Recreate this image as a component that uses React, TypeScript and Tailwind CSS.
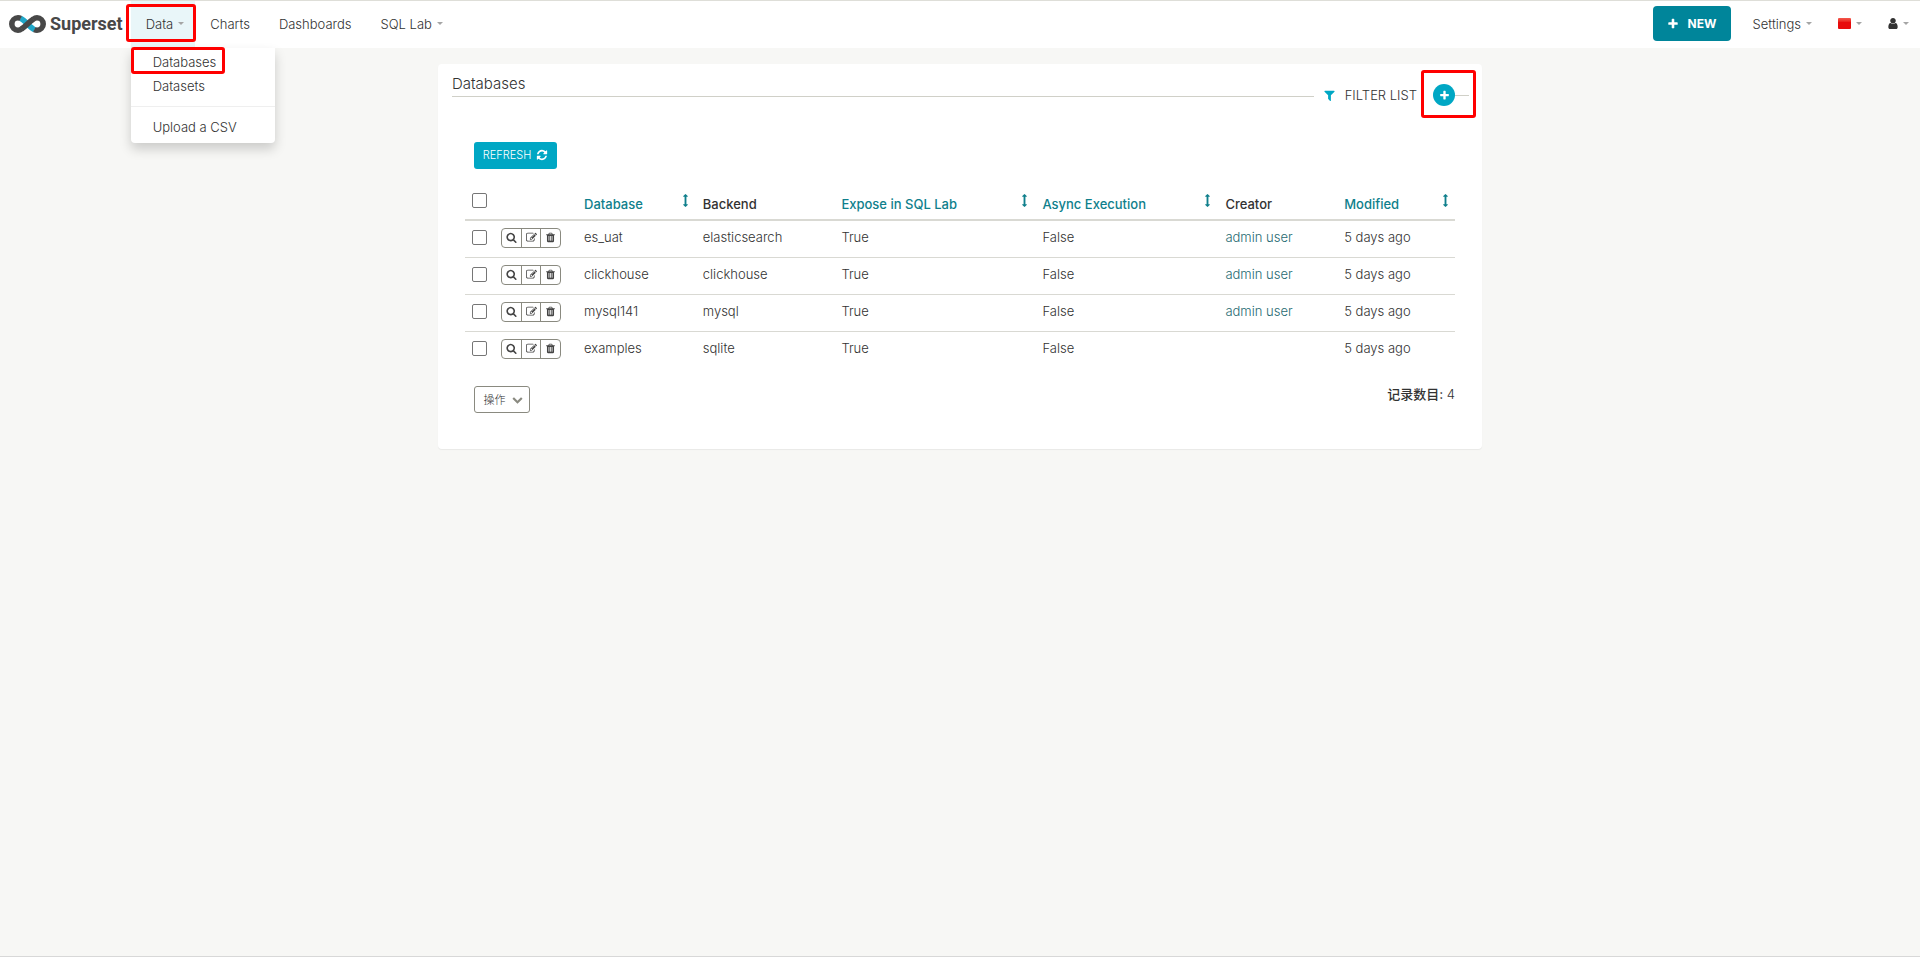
import type { ReactNode } from 'react';

const ICONS = {
  plus: 'M1600 736v192q0 40-28 68t-68 28h-416v416q0 40-28 68t-68 28h-192q-40 0-68-28t-28-68v-416h-416q-40 0-68-28t-28-68v-192q0-40 28-68t68-28h416v-416q0-40 28-68t68-28h192q40 0 68 28t28 68v416h416q40 0 68 28t28 68z',
  search:
    'M1216 832q0-185-131.5-316.5t-316.5-131.5-316.5 131.5-131.5 316.5 131.5 316.5 316.5 131.5 316.5-131.5 131.5-316.5zm512 832q0 52-38 90t-90 38q-54 0-90-38l-343-342q-179 124-399 124-143 0-273.5-55.5t-225-150-150-225-55.5-273.5 55.5-273.5 150-225 225-150 273.5-55.5 273.5 55.5 225 150 150 225 55.5 273.5q0 220-124 399l343 343q37 37 37 90z',
  edit: 'M888 1184l116-116-152-152-116 116v56h96v96h56zm440-720q-16-16-33 1l-350 350q-17 17-1 33t33-1l350-350q17-17 1-33zm80 594v190q0 119-84.5 203.5t-203.5 84.5h-832q-119 0-203.5-84.5t-84.5-203.5v-832q0-119 84.5-203.5t203.5-84.5h832q63 0 117 25 15 7 18 23 3 17-9 29l-49 49q-14 14-32 8-23-6-45-6h-832q-66 0-113 47t-47 113v832q0 66 47 113t113 47h832q66 0 113-47t47-113v-126q0-13 9-22l64-64q15-15 35-7t20 29zm-96-738l288 288-672 672h-288v-288zm444 132l-92 92-288-288 92-92q28-28 68-28t68 28l152 152q28 28 28 68t-28 68z',
  trash:
    'M704 1376v-704q0-14-9-23t-23-9h-64q-14 0-23 9t-9 23v704q0 14 9 23t23 9h64q14 0 23-9t9-23zm256 0v-704q0-14-9-23t-23-9h-64q-14 0-23 9t-9 23v704q0 14 9 23t23 9h64q14 0 23-9t9-23zm256 0v-704q0-14-9-23t-23-9h-64q-14 0-23 9t-9 23v704q0 14 9 23t23 9h64q14 0 23-9t9-23zm-544-992h448l-48-117q-7-9-17-11h-317q-10 2-17 11zm928 32v64q0 14-9 23t-23 9h-96v948q0 83-47 143.5t-113 60.5h-832q-66 0-113-58.5t-47-141.5v-952h-96q-14 0-23-9t-9-23v-64q0-14 9-23t23-9h309l70-167q15-37 54-63t79-26h320q40 0 79 26t54 63l70 167h309q14 0 23 9t9 23z',
  refresh:
    'M1639 1056q0 5-1 7-64 268-268 434.5t-478 166.5q-146 0-282.5-55t-243.5-157l-129 129q-19 19-45 19t-45-19-19-45v-448q0-26 19-45t45-19h448q26 0 45 19t19 45-19 45l-137 137q71 66 161 102t187 36q134 0 250-65t186-179q11-17 53-117 8-23 30-23h192q13 0 22.5 9.5t9.5 22.5zm25-800v448q0 26-19 45t-45 19h-448q-26 0-45-19t-19-45 19-45l138-138q-148-137-349-137-134 0-250 65t-186 179q-11 17-53 117-8 23-30 23h-199q-13 0-22.5-9.5t-9.5-22.5v-7q65-268 270-434.5t480-166.5q146 0 284 55.5t245 156.5l130-129q19-19 45-19t45 19 19 45z',
  filter:
    'M1595 295q17 41-14 70l-493 493v742q0 42-39 59-13 5-25 5-27 0-45-19l-256-256q-19-19-19-45v-486l-493-493q-31-29-14-70 17-39 59-39h1280q42 0 59 39z',
  user: 'M1536 1399q0 109-62.5 187t-150.5 78h-854q-88 0-150.5-78t-62.5-187q0-85 8.5-160.5t31.5-152 58.5-131 94-89 134.5-34.5q131 128 313 128t313-128q76 0 134.5 34.5t94 89 58.5 131 31.5 152 8.5 160.5zm-256-887q0 159-112.5 271.5t-271.5 112.5-271.5-112.5-112.5-271.5 112.5-271.5 271.5-112.5 271.5 112.5 112.5 271.5z',
  chevronDown:
    'M1683 808l-742 741q-19 19-45 19t-45-19l-742-741q-19-19-19-45.5t19-45.5l166-165q19-19 45-19t45 19l531 531 531-531q19-19 45-19t45 19l166 165q19 19 19 45.5t-19 45.5z',
  sort: 'M1216 320q0 26-19 45t-45 19h-128v1024h128q26 0 45 19t19 45-19 45l-256 256q-19 19-45 19t-45-19l-256-256q-19-19-19-45t19-45 45-19h128v-1024h-128q-26 0-45-19t-19-45 19-45l256-256q19-19 45-19t45 19l256 256q19 19 19 45z',
};

const Icon = ({
  name,
  className,
  viewBox = '0 0 1792 1792',
}: {
  name: keyof typeof ICONS;
  className: string;
  viewBox?: string;
}) => (
  <svg viewBox={viewBox} fill="currentColor" aria-hidden="true" className={`shrink-0 ${className}`}>
    <path d={ICONS[name]} />
  </svg>
);

const Caret = () => (
  <span className="border-x-[3px] border-t-[3px] border-x-transparent border-t-[#a5a5a5]" />
);

const Logo = () => (
  <a href="#" className="flex items-center gap-1 pb-[2px] pl-[9px]" aria-label="Superset">
    <svg viewBox="0 0 37 18" className="h-[18px] w-[37px]" fill="none" strokeWidth="5.6">
      <path d="M11.500 3.300c2.300 1.100 4.700 3.400 7 5.700s4.700 4.600 7 5.700" stroke="#20a7c9" />
      <path d="M13 13.600C11.700 14.600 10.500 15.200 9 15.200a6.200 6.200 0 0 1 0-12.400c1 0 1.900.2 2.700.6" stroke="#484848" />
      <path d="M24 4.400c1.300-1 2.500-1.600 4-1.600a6.200 6.200 0 0 1 0 12.400c-1 0-1.900-.2-2.700-.6" stroke="#484848" />
      <path d="M12.600 13.900c2-1.400 3.900-3 5.900-4.900s3.900-3.600 5.900-4.900" stroke="#484848" />
    </svg>
    <span className="font-[Roboto] text-[18px] leading-6 font-bold text-[#484848]">Superset</span>
  </a>
);

const NavItem = ({ children, caret, active }: { children: ReactNode; caret?: boolean; active?: boolean }) => (
  <button
    type="button"
    className={`flex h-full items-center gap-[5px] ${caret ? 'pr-[11px]' : 'pr-[14px]'} pb-[2px] pl-[15px] ${active ? 'bg-[#e9f6f9]' : ''}`}
  >
    {children}
    {caret && <Caret />}
  </button>
);

const Checkbox = ({ label }: { label: string }) => (
  <input
    type="checkbox"
    aria-label={label}
    className="block size-[15px] appearance-none rounded-[2px] border border-[#767676] bg-white"
  />
);

const COLUMNS = [
  { title: 'Database', sortable: true },
  { title: 'Backend', sortable: false },
  { title: 'Expose in SQL Lab', sortable: true },
  { title: 'Async Execution', sortable: true },
  { title: 'Creator', sortable: false },
  { title: 'Modified', sortable: true },
];

const ROWS = [
  { name: 'es_uat', backend: 'elasticsearch', creator: 'admin user' },
  { name: 'clickhouse', backend: 'clickhouse', creator: 'admin user' },
  { name: 'mysql141', backend: 'mysql', creator: 'admin user' },
  { name: 'examples', backend: 'sqlite', creator: '' },
];

const Navbar = () => (
  <header className="flex h-12 justify-between border-t border-[#deded8] bg-white">
    <div className="flex">
      <Logo />
      <nav className="ml-2 flex">
        <div className="relative">
          <NavItem caret active>
            Data
          </NavItem>
          <span className="pointer-events-none absolute top-[3px] -right-px -left-[5px] h-[38px] rounded-[3px] border-3 border-[#ff0000]" />
          <ul className="absolute top-full left-0 z-10 w-36 rounded-b-[4px] bg-white pb-1 shadow-[0_6px_12px_rgba(0,0,0,0.18)]">
            <li className="relative pt-[2px]">
              <a href="#" className="block pl-[22px] leading-6">
                Databases
              </a>
              <span className="pointer-events-none absolute -top-px left-0 h-[27px] w-[94px] rounded-[3px] border-3 border-[#ff0000]" />
            </li>
            <li>
              <a href="#" className="block pl-[22px] leading-6">
                Datasets
              </a>
            </li>
            <li className="mt-2 border-t border-[#efefef] pt-2">
              <a href="#" className="block pl-[22px] leading-6">
                Upload a CSV
              </a>
            </li>
          </ul>
        </div>
        <NavItem>Charts</NavItem>
        <NavItem>Dashboards</NavItem>
        <NavItem caret>SQL Lab</NavItem>
      </nav>
    </div>
    <div className="flex items-center">
      <button
        type="button"
        className="mr-[7px] mb-[2px] flex h-[35px] w-[78px] items-center justify-center gap-[9px] rounded-[4px] bg-[#00859a] text-xs font-bold text-white"
      >
        <Icon name="plus" className="size-3" />
        NEW
      </button>
      <NavItem caret>Settings</NavItem>
      <NavItem caret>
        <span className="h-[11px] w-[13px] rounded-[1px] bg-linear-to-b from-[#f4574c] to-[#e80c0c] to-40%" />
      </NavItem>
      <NavItem caret>
        <Icon name="user" viewBox="256 0 1280 1792" className="h-[13px] w-[10px] text-[#323232]" />
      </NavItem>
    </div>
  </header>
);

const DatabaseTable = () => (
  <table className="w-full table-fixed text-left">
    <colgroup>
      <col className="w-[28px]" />
      <col className="w-[83px]" />
      <col className="w-[12%]" />
      <col className="w-[14%]" />
      <col className="w-[201px]" />
      <col />
      <col className="w-[12%]" />
      <col className="w-[12%]" />
    </colgroup>
    <thead>
      <tr className="h-9 border-b-2 border-[#d9d9d3]">
        <th className="pb-[3px] pl-[7px]">
          <Checkbox label="Select all" />
        </th>
        <th />
        {COLUMNS.map(({ title, sortable }) => (
          <th key={title} className="pt-1 pr-[3px] pl-2 font-medium">
            {sortable ? (
              <a href="#" className="flex justify-between text-[#0f7f8c]">
                {title}
                <Icon name="sort" className="size-[13px]" />
              </a>
            ) : (
              <span className="text-[#323232]">{title}</span>
            )}
          </th>
        ))}
      </tr>
    </thead>
    <tbody>
      {ROWS.map((row) => (
        <tr key={row.name} className="h-[37px] border-t border-[#d9d9d3] first:border-t-0">
          <td className="pb-[2px] pl-[7px]">
            <Checkbox label={`Select ${row.name}`} />
          </td>
          <td className="pb-[2px] pl-2">
            <div className="flex h-5 w-[60px] divide-x divide-[#8a8a80] rounded-[4px] border border-[#8a8a80] text-[#444444]">
              <button type="button" aria-label="Show" className="flex flex-1 items-center justify-center">
                <Icon name="search" className="size-[11px]" />
              </button>
              <button type="button" aria-label="Edit" className="flex flex-1 items-center justify-center">
                <Icon name="edit" className="size-[11px]" />
              </button>
              <button type="button" aria-label="Delete" className="flex flex-1 items-center justify-center">
                <Icon name="trash" className="size-[11px]" />
              </button>
            </div>
          </td>
          <td className="px-2 pb-1">{row.name}</td>
          <td className="px-2 pb-1">{row.backend}</td>
          <td className="px-2 pb-1">True</td>
          <td className="px-2 pb-1">False</td>
          <td className="px-2 pb-1">
            {row.creator && (
              <a href="#" className="text-[#1f6a72]">
                {row.creator}
              </a>
            )}
          </td>
          <td className="px-2 pb-1">5 days ago</td>
        </tr>
      ))}
    </tbody>
  </table>
);

const App = () => (
  <div className="flex min-h-screen flex-col border-b border-[#d8d8d8] bg-[#f7f7f5] font-[Inter,'Noto_Sans_CJK_SC',sans-serif] text-[13px] leading-5 font-light text-[#323232]">
    <Navbar />
    <main className="mx-auto mt-4 w-full max-w-[1044px] rounded-[4px] bg-white pt-[10px] pr-[13px] pb-9 pl-[14px] shadow-[0_1px_1px_rgba(0,0,0,0.06)]">
      <div className="flex h-[44px] items-start">
        <h1 className="mr-auto flex-1 border-b border-[#d0d0c8] pb-[2px] text-[15px]">Databases</h1>
        <div className="flex h-[42px] items-center">
          <a href="#" className="flex items-center gap-[9px] pr-1 pl-[9px]">
            <Icon name="filter" className="size-[13px] text-[#00a7c4]" />
            FILTER LIST
          </a>
          <div className="relative flex items-center">
            <button
              type="button"
              aria-label="Add database"
              className="ml-3 flex size-[22px] items-center justify-center rounded-full bg-[#00a7c4] text-white"
            >
              <Icon name="plus" className="size-[11px]" />
            </button>
            <span className="w-[14px] border-t border-[#d0d0c8]" />
            <span className="pointer-events-none absolute -top-[14px] -right-[7px] left-0 h-12 rounded-[3px] border-3 border-[#ff0000]" />
          </div>
        </div>
      </div>
      <div className="pr-[14px] pl-[13px]">
        <button
          type="button"
          className="mt-6 mb-[15px] ml-[9px] flex h-[27px] w-[83px] items-center justify-center gap-[5px] rounded-[3px] bg-[#00a7c4] pb-[2px] text-[11px] text-white"
        >
          REFRESH
          <Icon name="refresh" className="size-3" />
        </button>
        <DatabaseTable />
        <div className="flex items-start justify-between pt-4 pl-[9px]">
          <button
            type="button"
            className="mt-[2px] flex h-[27px] w-14 items-center justify-center gap-[6px] rounded-[3px] border border-[#8a8a80] pl-[2px] text-[11px]"
          >
            操作
            <Icon name="chevronDown" className="size-[11px] text-[#8a8a80]" />
          </button>
          <p>
            <strong className="font-medium text-[#323232]">记录数目:</strong> 4
          </p>
        </div>
      </div>
    </main>
  </div>
);

export default App;
